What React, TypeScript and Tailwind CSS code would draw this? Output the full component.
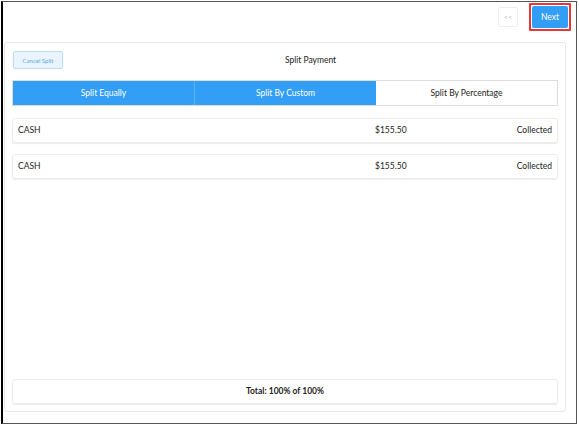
import React from "react";

export default function App() {
  const rows = [
    { name: "CASH", amount: "$155.50", status: "Collected" },
    { name: "CASH", amount: "$155.50", status: "Collected" },
  ];
  return (
    <div
      className="w-[579px] h-[427px] bg-white"
      style={{ fontFamily: "Lato, 'Noto Sans', sans-serif" }}
    >
      <div className="ml-[1px] mt-[1px] w-[576px] h-[423px] border border-[#555] border-l-2 border-l-black flex flex-col">
        <div className="h-[40px] flex justify-end items-start pt-[1px] pr-[5px] gap-[11px] shrink-0">
          <div className="mt-[4px] w-[20px] h-[20px] border border-[#eeeeee] rounded-[2px] flex items-center justify-center text-[7px] text-[#b8b8b8]">
            {"<<"}
          </div>
          <div className="border-2 border-[#e53935] p-[1px] rounded-[1px]">
            <div className="w-[36px] h-[22px] bg-[#339ef6] rounded-[2px] flex items-center justify-center text-[8.5px] text-white">
              Next
            </div>
          </div>
        </div>
        <div className="ml-[1px] w-[562px] h-[370px] border border-[#e6e6e6] rounded-[3px] px-[7px] pt-[8px] pb-[7px] flex flex-col">
          <div className="h-[18px] flex items-center">
            <div className="ml-[1px] w-[50px] h-[18px] bg-[#eaf4fe] border border-[#bcdcf7] rounded-[2px] flex items-center justify-center text-[6px] text-[#5fa9ea]">
              Cancel Split
            </div>
            <div className="flex-1 text-center text-[8.5px] text-[#222]">
              Split Payment
            </div>
          </div>
          <div className="mt-[11px] h-[26px] flex border border-[#dddddd] text-[8.5px]">
            <div className="flex-1 bg-[#339ef6] text-white flex items-center justify-center border-r border-[#5cb1f7]">
              Split Equally
            </div>
            <div className="flex-1 bg-[#339ef6] text-white flex items-center justify-center">
              Split By Custom
            </div>
            <div className="flex-1 bg-white text-[#222] flex items-center justify-center">
              Split By Percentage
            </div>
          </div>
          <div className="mt-[12px] flex flex-col gap-[11px]">
            {rows.map((r, i) => (
              <div
                key={i}
                className="h-[25px] border border-[#ececec] rounded-[3px] shadow-[0_1px_1px_rgba(0,0,0,0.08)] grid grid-cols-[357px_1fr_auto] items-center px-[5px] text-[8.5px] text-[#222]"
              >
                <span>{r.name}</span>
                <span>{r.amount}</span>
                <span>{r.status}</span>
              </div>
            ))}
          </div>
          <div className="flex-1" />
          <div className="h-[25px] border border-[#ececec] rounded-[3px] shadow-[0_1px_1px_rgba(0,0,0,0.08)] flex items-center justify-center text-[8.5px] font-bold text-[#222]">
            Total: 100% of 100%
          </div>
        </div>
      </div>
    </div>
  );
}
